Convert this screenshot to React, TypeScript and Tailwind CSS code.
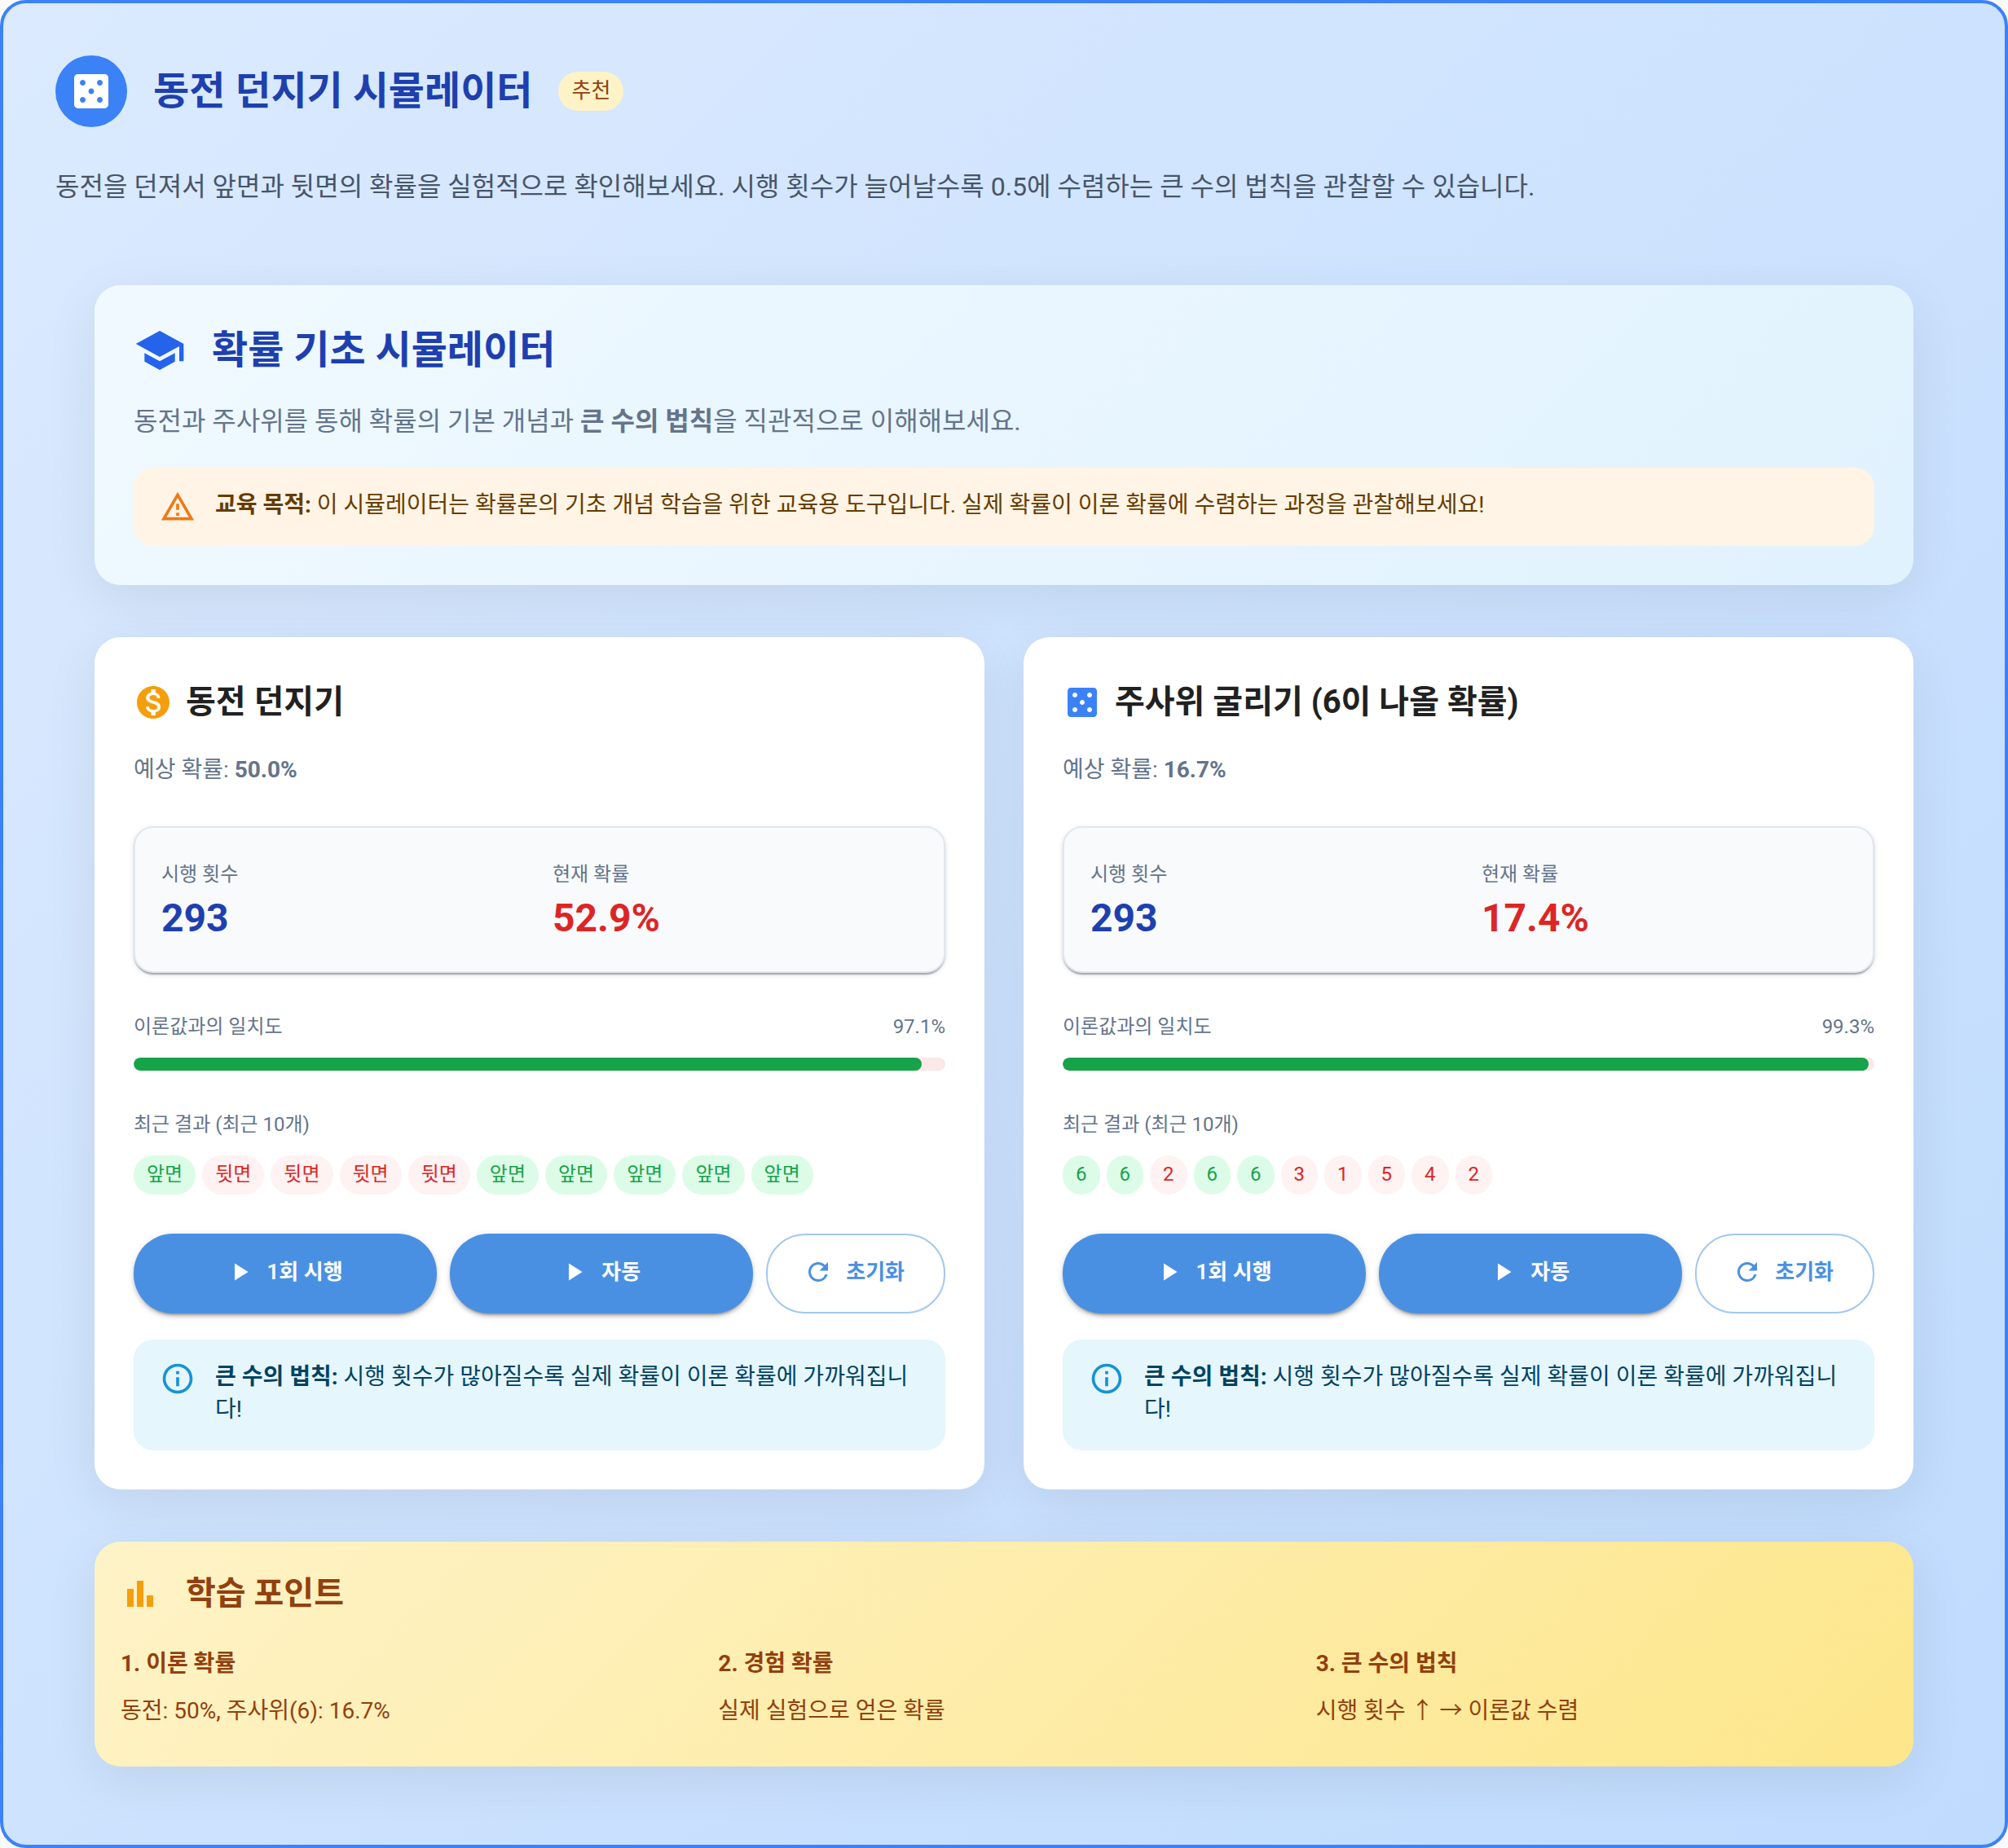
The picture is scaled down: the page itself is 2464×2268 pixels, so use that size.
import type { ReactNode } from "react";
import { MdCasino, MdMonetizationOn, MdPlayArrow, MdRefresh, MdSchool } from "react-icons/md";

type Result = { label: string; hit: boolean };

type Simulation = {
  id: string;
  title: string;
  icon: ReactNode;
  expected: string;
  trials: number;
  current: string;
  match: number;
  results: Result[];
};

const coin = (hit: boolean): Result => ({ label: hit ? "앞면" : "뒷면", hit });
const dice = (n: number): Result => ({ label: String(n), hit: n === 6 });

const simulations: Simulation[] = [
  {
    id: "coin",
    title: "동전 던지기",
    icon: <MdMonetizationOn className="size-12 shrink-0 text-[#f59e0b]" />,
    expected: "50.0%",
    trials: 293,
    current: "52.9%",
    match: 97.1,
    results: [true, false, false, false, false, true, true, true, true, true].map(coin),
  },
  {
    id: "dice",
    title: "주사위 굴리기 (6이 나올 확률)",
    icon: <MdCasino className="size-12 shrink-0 text-[#3b82f6]" />,
    expected: "16.7%",
    trials: 293,
    current: "17.4%",
    match: 99.3,
    results: [6, 6, 2, 6, 6, 3, 1, 5, 4, 2].map(dice),
  },
];

const points = [
  { title: "1. 이론 확률", text: "동전: 50%, 주사위(6): 16.7%" },
  { title: "2. 경험 확률", text: "실제 실험으로 얻은 확률" },
  { title: "3. 큰 수의 법칙", text: "시행 횟수 ↑ → 이론값 수렴" },
];

function WarningIcon() {
  return (
    <svg viewBox="0 0 24 24" fill="currentColor" className="size-11 shrink-0 text-[#ed6c02] opacity-90" aria-hidden="true">
      <path d="M12 5.99L19.53 19H4.47L12 5.99M12 2L1 21h22L12 2zm1 14h-2v2h2v-2zm0-6h-2v4h2v-4z" />
    </svg>
  );
}

function InfoIcon() {
  return (
    <svg viewBox="0 0 24 24" fill="currentColor" className="size-11 shrink-0 text-[#0288d1] opacity-90" aria-hidden="true">
      <path d="M11 9h2V7h-2M12 20c-4.41 0-8-3.59-8-8s3.59-8 8-8 8 3.59 8 8-3.59 8-8 8m0-18A10 10 0 0 0 2 12a10 10 0 0 0 10 10 10 10 0 0 0 10-10A10 10 0 0 0 12 2m-1 15h2v-6h-2v6z" />
    </svg>
  );
}

function BarChartIcon() {
  return (
    <svg viewBox="0 0 24 24" fill="currentColor" className="size-12 shrink-0 text-[#f59e0b]" aria-hidden="true">
      <path d="M4 9h4v11H4zm12 4h4v7h-4zm-6-9h4v16h-4z" />
    </svg>
  );
}

function SimulationCard({ sim }: { sim: Simulation }) {
  return (
    <section className="rounded-[32px] bg-white p-12 shadow-[0_16px_64px_rgba(0,0,0,0.08)]">
      <h3 className="flex items-center gap-4 text-[40px] leading-16 font-bold text-[#212121]">
        {sim.icon}
        {sim.title}
      </h3>
      <p className="mt-8 mb-[50px] text-[28px] leading-[38px] text-[#64748b]">
        예상 확률: <strong className="font-bold">{sim.expected}</strong>
      </p>

      <dl className="grid grid-cols-2 gap-8 rounded-[24px] border-2 border-[#e2e8f0] bg-[#f8fafc] px-8 pt-8 pb-9 shadow-[0_4px_2px_-2px_rgba(0,0,0,0.2),0_2px_2px_0_rgba(0,0,0,0.14),0_2px_6px_0_rgba(0,0,0,0.12)]">
        <div>
          <dt className="text-2xl leading-[50px] text-[#64748b]">시행 횟수</dt>
          <dd className="text-5xl leading-[58px] font-bold text-[#1e40af]">{sim.trials}</dd>
        </div>
        <div>
          <dt className="text-2xl leading-[50px] text-[#64748b]">현재 확률</dt>
          <dd className="text-5xl leading-[58px] font-bold text-[#dc2626]">{sim.current}</dd>
        </div>
      </dl>

      <div className="mt-12 flex justify-between text-2xl leading-9 text-[#64748b]">
        <span id={`${sim.id}-match`}>이론값과의 일치도</span>
        <span>{sim.match}%</span>
      </div>
      <div
        role="progressbar"
        aria-labelledby={`${sim.id}-match`}
        aria-valuenow={sim.match}
        aria-valuemin={0}
        aria-valuemax={100}
        className="mt-5 h-4 overflow-hidden rounded-full bg-[#fbe8e8]"
      >
        <div className="h-full rounded-full bg-[#16a34a]" style={{ width: `${sim.match}%` }} />
      </div>

      <p className="mt-12 text-2xl leading-9 text-[#64748b]">최근 결과 (최근 10개)</p>
      <ul className="mt-5 flex flex-wrap gap-2">
        {sim.results.map((r, i) => (
          <li
            key={i}
            className={
              r.hit
                ? "h-12 rounded-full bg-[#dcfce7] px-4 text-2xl leading-[46px] text-[#16a34a]"
                : "h-12 rounded-full bg-[#fef2f2] px-4 text-2xl leading-[46px] text-[#dc2626]"
            }
          >
            {r.label}
          </li>
        ))}
      </ul>

      <div className="mt-12 flex gap-4 text-[26px] leading-[50px] font-semibold">
        {["1회 시행", "자동"].map((label) => (
          <button
            key={label}
            type="button"
            className="flex flex-1 items-center justify-center gap-4 rounded-[48px] bg-[#4a90e2] pt-[22px] pr-1 pb-[26px] text-white shadow-[0_6px_2px_-4px_rgba(0,0,0,0.2),0_4px_4px_0_rgba(0,0,0,0.14),0_2px_10px_0_rgba(0,0,0,0.12)]"
          >
            <MdPlayArrow className="size-9 shrink-0" />
            {label}
          </button>
        ))}
        <button
          type="button"
          className="flex shrink-0 items-center justify-center gap-4 rounded-[48px] border-2 border-[#4a90e2]/50 pr-12 pb-1 pl-11 text-[#4a90e2]"
        >
          <MdRefresh className="size-9 shrink-0" />
          초기화
        </button>
      </div>

      <div className="mt-8 flex gap-6 rounded-[24px] bg-[#e5f6fd] px-8 pt-[26px] pb-[30px] text-[28px] leading-10 text-[#014361]">
        <InfoIcon />
        <p>
          <strong className="font-bold">큰 수의 법칙:</strong> 시행 횟수가 많아질수록 실제 확률이 이론 확률에 가까워집니다!
        </p>
      </div>
    </section>
  );
}

export default function App() {
  return (
    <div className="bg-[#fafafa] font-[Roboto,'Noto_Sans_CJK_KR',sans-serif]">
      <main className="rounded-[32px] border-4 border-[#3b82f6] bg-linear-135 from-[#dbeafe] to-[#bfdbfe] px-16 pt-16 pb-24">
        <header>
          <div className="flex items-center gap-8">
            <span className="flex size-22 shrink-0 items-center justify-center rounded-full bg-[#3b82f6]">
              <MdCasino className="size-14 text-white" />
            </span>
            <h1 className="text-5xl leading-16 font-bold text-[#1e40af]">동전 던지기 시뮬레이터</h1>
            <span className="h-12 rounded-full bg-[#fef3c7] px-4 text-[26px] leading-[46px] text-[#92400e]">추천</span>
          </div>
          <p className="mt-12 text-[32px] leading-[50px] text-[#475569]">
            동전을 던져서 앞면과 뒷면의 확률을 실험적으로 확인해보세요. 시행 횟수가 늘어날수록 0.5에 수렴하는 큰 수의 법칙을 관찰할 수 있습니다.
          </p>
        </header>

        <div className="mt-24 flex flex-col gap-16 px-12">
          <section className="rounded-[32px] bg-linear-135 from-[#f0f9ff] to-[#e0f2fe] p-12 shadow-[0_16px_64px_rgba(0,0,0,0.08)]">
            <h2 className="flex items-center gap-8 text-5xl leading-16 font-bold text-[#1e40af]">
              <MdSchool className="size-16 shrink-0 text-[#2563eb]" />
              확률 기초 시뮬레이터
            </h2>
            <p className="mt-8 mb-[34px] text-[32px] leading-[46px] text-[#64748b]">
              동전과 주사위를 통해 확률의 기본 개념과 <strong className="font-bold">큰 수의 법칙</strong>을 직관적으로 이해해보세요.
            </p>
            <div className="flex gap-6 rounded-[24px] bg-[#fff4e5] px-8 py-[26px] text-[28px] leading-10 text-[#663c00]">
              <WarningIcon />
              <p>
                <strong className="font-bold">교육 목적:</strong> 이 시뮬레이터는 확률론의 기초 개념 학습을 위한 교육용 도구입니다. 실제 확률이 이론 확률에 수렴하는 과정을 관찰해보세요!
              </p>
            </div>
          </section>

          <div className="grid grid-cols-2 gap-12">
            {simulations.map((sim) => (
              <SimulationCard key={sim.id} sim={sim} />
            ))}
          </div>

          <section className="rounded-[32px] bg-linear-135 from-[#fef3c7] to-[#fde68a] px-8 pt-8 pb-12 text-[#92400e] shadow-[0_16px_64px_rgba(0,0,0,0.08)]">
            <h2 className="flex items-center gap-8 text-[40px] leading-16 font-bold">
              <BarChartIcon />
              학습 포인트
            </h2>
            <div className="mt-8 grid grid-cols-3 gap-8 text-[28px]">
              {points.map((p) => (
                <div key={p.title}>
                  <h3 className="leading-11 font-bold">{p.title}</h3>
                  <p className="mt-4 leading-10">{p.text}</p>
                </div>
              ))}
            </div>
          </section>
        </div>
      </main>
    </div>
  );
}
